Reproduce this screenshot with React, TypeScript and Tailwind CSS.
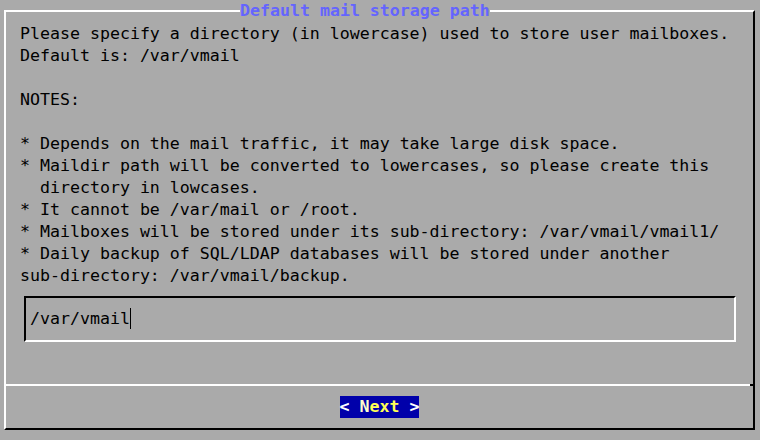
import React from 'react';

const lines = [
  'Please specify a directory (in lowercase) used to store user mailboxes.',
  'Default is: /var/vmail',
  '',
  'NOTES:',
  '',
  '* Depends on the mail traffic, it may take large disk space.',
  '* Maildir path will be converted to lowercases, so please create this',
  '  directory in lowcases.',
  '* It cannot be /var/mail or /root.',
  '* Mailboxes will be stored under its sub-directory: /var/vmail/vmail1/',
  '* Daily backup of SQL/LDAP databases will be stored under another',
  'sub-directory: /var/vmail/backup.',
];

export default function App() {
  return (
    <div
      className="w-[760px] h-[440px] bg-[#aaaaaa] pt-[10px] pl-[4px] text-[16.6px] leading-[22px] text-black overflow-hidden"
      style={{ fontFamily: '"DejaVu Sans Mono", "Liberation Mono", monospace' }}
    >
      {/* dialog frame: light top/left, dark bottom/right */}
      <div className="relative w-[751px] h-[420px] border-t-2 border-l-2 border-t-white border-l-white border-r-2 border-b-2 border-r-black border-b-black flex flex-col">
        {/* title sits over the top border */}
        <div className="absolute -top-[12px] left-[234px] h-[22px] bg-[#aaaaaa] font-bold text-[#6464ff] whitespace-pre">
          Default mail storage path
        </div>

        {/* message text */}
        <div className="pl-[14px] pt-[11px] whitespace-pre">
          {lines.map((line, i) => (
            <div key={i} className="h-[22px]">
              {line}
            </div>
          ))}
        </div>

        {/* input field */}
        <div className="ml-[18px] mt-[9px] w-[712px] h-[46px] border-2 border-t-black border-l-black border-r-white border-b-white pl-[4px] pt-[10px] flex items-start">
          <span className="whitespace-pre">/var/vmail</span>
          <span className="w-px h-[21px] bg-black" />
        </div>

        {/* separator */}
        <div className="mt-[42px] flex h-[2px]">
          <div className="flex-1 bg-white" />
          <div className="w-[3px] bg-black" />
        </div>

        {/* buttons */}
        <div className="mt-[10px] flex justify-center">
          <div className="bg-[#0000aa] h-[22px] whitespace-pre font-bold">
            <span className="text-white">{'< '}</span>
            <span className="text-[#ffffcc]">N</span>
            <span className="text-[#ffff55]">ext</span>
            <span className="text-white">{' >'}</span>
          </div>
        </div>
      </div>
    </div>
  );
}
